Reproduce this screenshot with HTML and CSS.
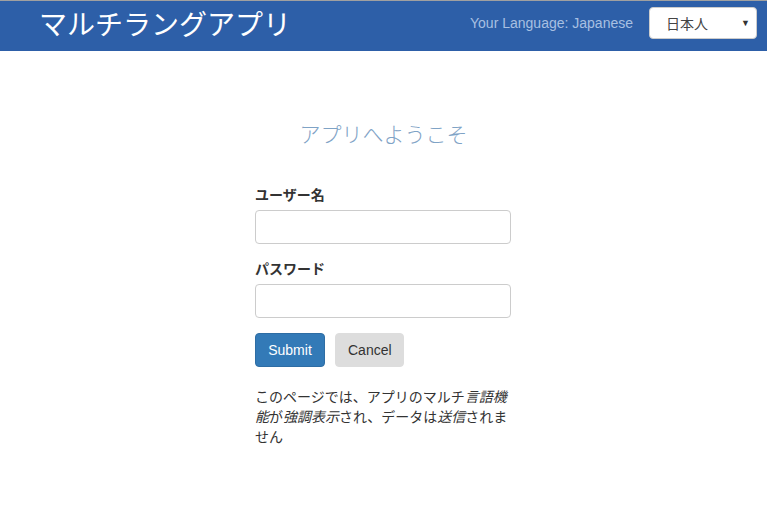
FILE: index.html
```html
<!DOCTYPE html>
<html lang="ja">
<head>
<meta charset="utf-8">
<title>マルチラングアプリ</title>
<link rel="stylesheet" href="styles.css">
</head>
<body>
<header class="navbar">
  <div class="brand">マルチラングアプリ</div>
  <div class="nav-right">
    <span class="lang-label">Your Language: Japanese</span>
    <div class="select">
      <span class="select-value">日本人</span>
      <span class="select-arrow">▼</span>
    </div>
  </div>
</header>
<main class="main">
  <h1 class="welcome">アプリへようこそ</h1>
  <form class="form">
    <label class="label">ユーザー名</label>
    <input class="input" type="text">
    <label class="label">パスワード</label>
    <input class="input" type="password">
    <div class="buttons">
      <button type="button" class="btn btn-primary">Submit</button>
      <button type="button" class="btn btn-default">Cancel</button>
    </div>
    <p class="note">このページでは、アプリのマルチ<em>言語機</em><em>能</em>が<em>強調表示</em>され、データは<em>送信</em>されま<span>せん</span></p>
  </form>
</main>
</body>
</html>
```
FILE: styles.css
```css
html, body {
  margin: 0;
  padding: 0;
  background: #fff;
}
body {
  font-family: "Liberation Sans", "Noto Sans CJK JP", sans-serif;
  font-size: 14px;
  color: #333;
}
.navbar {
  border-top: 1px solid #a0a0a0;
  background: #2d5fa8;
  height: 50px;
  display: flex;
  align-items: center;
  justify-content: space-between;
  padding: 0 10px 0 39px;
}
.brand {
  color: #fff;
  font-size: 28px;
  font-family: "Noto Sans CJK JP", sans-serif;
  line-height: 1;
  margin-top: -6px;
}
.nav-right {
  display: flex;
  align-items: center;
  gap: 16px;
  margin-top: -6px;
}
.lang-label {
  color: #a8c0e2;
  font-size: 14px;
}
.select {
  height: 32px;
  background: #fff;
  border: 1px solid #ccc;
  border-radius: 4px;
  display: flex;
  align-items: center;
  justify-content: space-between;
  padding: 0 6px 0 16px;
  box-sizing: border-box;
  width: 108px;
}
.select-value {
  font-family: "Noto Sans CJK JP", sans-serif;
  font-size: 14px;
  color: #444;
}
.select-arrow {
  font-size: 9px;
  color: #333;
}
.main {
  display: flex;
  flex-direction: column;
  align-items: center;
}
.welcome {
  margin: 68px 0 0 0;
  font-family: "Noto Sans CJK JP", sans-serif;
  font-weight: 300;
  font-size: 21px;
  line-height: 28px;
  color: #7fa3c6;
}
.form {
  width: 256px;
  margin-top: 38px;
  margin-left: -1px;
  display: flex;
  flex-direction: column;
}
.label {
  font-weight: bold;
  font-size: 14px;
  line-height: 20px;
  margin-bottom: 5px;
  color: #333;
}
.input {
  height: 34px;
  box-sizing: border-box;
  border: 1px solid #ccc;
  border-radius: 4px;
  margin: 0 0 15px 0;
  padding: 6px 12px;
  font-size: 14px;
}
.buttons {
  display: flex;
  gap: 10px;
}
.btn {
  height: 34px;
  border-radius: 4px;
  font-family: "Liberation Sans", Arial, sans-serif;
  font-size: 14px;
  padding: 0 12px;
  border: 1px solid transparent;
  cursor: pointer;
}
.btn-primary {
  background: #337ab7;
  border-color: #2e6da4;
  color: #fff;
  width: 70px;
}
.btn-default {
  background: #dddddd;
  border-color: #dddddd;
  color: #333;
  width: 69px;
}
.note {
  margin: 20px 0 0 0;
  line-height: 20px;
  font-size: 14px;
  color: #333;
  font-family: "Liberation Sans", "Noto Sans CJK JP", sans-serif;
}
.note em {
  font-style: italic;
}
```
